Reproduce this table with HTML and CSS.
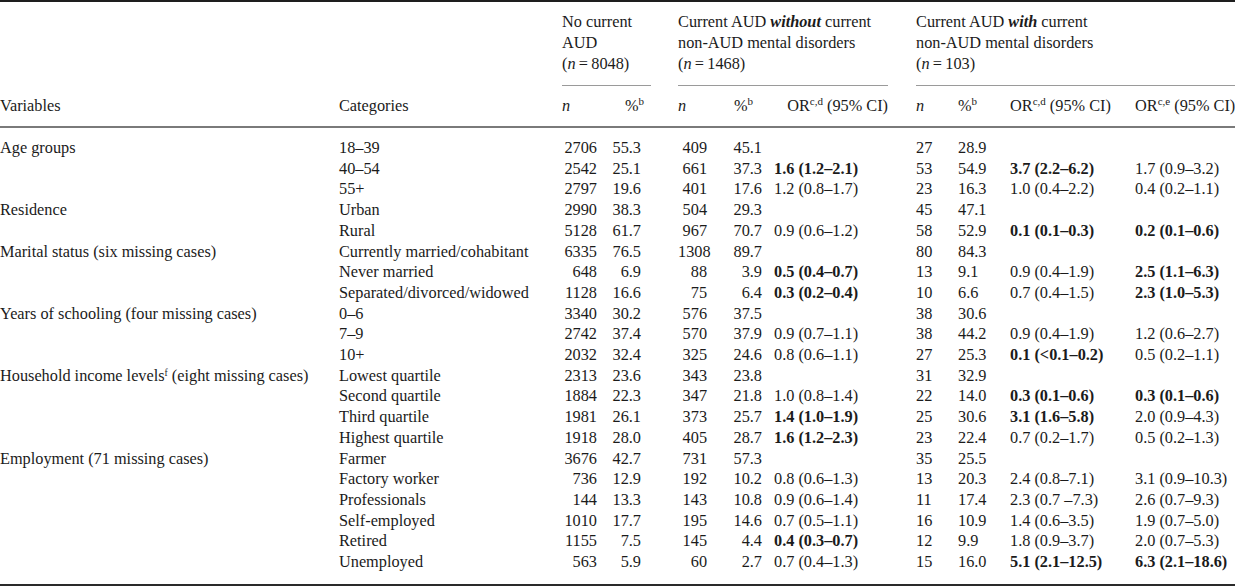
FILE: index.html
```html
<!DOCTYPE html>
<html lang="en">
<head>
<meta charset="utf-8">
<title>AUD table</title>
<link rel="stylesheet" href="styles.css">
</head>
<body>
<table class="t">
  <colgroup>
    <col class="c-var"><col class="c-cat">
    <col class="c-g1n"><col class="c-g1p">
    <col class="c-g2n"><col class="c-g2p"><col class="c-g2or">
    <col class="c-g3n"><col class="c-g3p"><col class="c-g3or"><col class="c-g3or2">
  </colgroup>
  <thead>
    <tr class="grp">
      <th></th><th></th>
      <th colspan="2"><div class="gh g1">No current<br>AUD<br>(<i>n</i>&thinsp;=&thinsp;8048)</div></th>
      <th colspan="3"><div class="gh g2">Current AUD <b><i>without</i></b> current<br>non-AUD mental disorders<br>(<i>n</i>&thinsp;=&thinsp;1468)</div></th>
      <th colspan="4"><div class="gh g3">Current AUD <b><i>with</i></b> current<br>non-AUD mental disorders<br>(<i>n</i>&thinsp;=&thinsp;103)</div></th>
    </tr>
    <tr class="sub">
      <th>Variables</th><th>Categories</th>
      <th class="h-g1n"><i>n</i></th><th class="h-g1p">%<sup>b</sup></th>
      <th class="h-g2n"><i>n</i></th><th class="h-g2p">%<sup>b</sup></th><th class="h-g2or">OR<sup>c,d</sup> (95% CI)</th>
      <th><i>n</i></th><th>%<sup>b</sup></th><th>OR<sup>c,d</sup> (95% CI)</th><th>OR<sup>c,e</sup> (95% CI)</th>
    </tr>
  </thead>
  <tbody>
    <tr class="first"><td>Age groups</td><td>18–39</td><td class="g1n">2706</td><td class="g1p">55.3</td><td class="g2n">409</td><td class="g2p">45.1</td><td></td><td>27</td><td>28.9</td><td></td><td></td></tr>
    <tr><td></td><td>40–54</td><td class="g1n">2542</td><td class="g1p">25.1</td><td class="g2n">661</td><td class="g2p">37.3</td><td><b>1.6 (1.2–2.1)</b></td><td>53</td><td>54.9</td><td><b>3.7 (2.2–6.2)</b></td><td>1.7 (0.9–3.2)</td></tr>
    <tr><td></td><td>55+</td><td class="g1n">2797</td><td class="g1p">19.6</td><td class="g2n">401</td><td class="g2p">17.6</td><td>1.2 (0.8–1.7)</td><td>23</td><td>16.3</td><td>1.0 (0.4–2.2)</td><td>0.4 (0.2–1.1)</td></tr>
    <tr><td>Residence</td><td>Urban</td><td class="g1n">2990</td><td class="g1p">38.3</td><td class="g2n">504</td><td class="g2p">29.3</td><td></td><td>45</td><td>47.1</td><td></td><td></td></tr>
    <tr><td></td><td>Rural</td><td class="g1n">5128</td><td class="g1p">61.7</td><td class="g2n">967</td><td class="g2p">70.7</td><td>0.9 (0.6–1.2)</td><td>58</td><td>52.9</td><td><b>0.1 (0.1–0.3)</b></td><td><b>0.2 (0.1–0.6)</b></td></tr>
    <tr><td>Marital status (six missing cases)</td><td>Currently married/cohabitant</td><td class="g1n">6335</td><td class="g1p">76.5</td><td class="g2n">1308</td><td class="g2p">89.7</td><td></td><td>80</td><td>84.3</td><td></td><td></td></tr>
    <tr><td></td><td>Never married</td><td class="g1n">648</td><td class="g1p">6.9</td><td class="g2n">88</td><td class="g2p">3.9</td><td><b>0.5 (0.4–0.7)</b></td><td>13</td><td>9.1</td><td>0.9 (0.4–1.9)</td><td><b>2.5 (1.1–6.3)</b></td></tr>
    <tr><td></td><td>Separated/divorced/widowed</td><td class="g1n">1128</td><td class="g1p">16.6</td><td class="g2n">75</td><td class="g2p">6.4</td><td><b>0.3 (0.2–0.4)</b></td><td>10</td><td>6.6</td><td>0.7 (0.4–1.5)</td><td><b>2.3 (1.0–5.3)</b></td></tr>
    <tr><td>Years of schooling (four missing cases)</td><td>0–6</td><td class="g1n">3340</td><td class="g1p">30.2</td><td class="g2n">576</td><td class="g2p">37.5</td><td></td><td>38</td><td>30.6</td><td></td><td></td></tr>
    <tr><td></td><td>7–9</td><td class="g1n">2742</td><td class="g1p">37.4</td><td class="g2n">570</td><td class="g2p">37.9</td><td>0.9 (0.7–1.1)</td><td>38</td><td>44.2</td><td>0.9 (0.4–1.9)</td><td>1.2 (0.6–2.7)</td></tr>
    <tr><td></td><td>10+</td><td class="g1n">2032</td><td class="g1p">32.4</td><td class="g2n">325</td><td class="g2p">24.6</td><td>0.8 (0.6–1.1)</td><td>27</td><td>25.3</td><td><b>0.1 (&lt;0.1–0.2)</b></td><td>0.5 (0.2–1.1)</td></tr>
    <tr><td>Household income levels<sup class="f">f</sup> (eight missing cases)</td><td>Lowest quartile</td><td class="g1n">2313</td><td class="g1p">23.6</td><td class="g2n">343</td><td class="g2p">23.8</td><td></td><td>31</td><td>32.9</td><td></td><td></td></tr>
    <tr><td></td><td>Second quartile</td><td class="g1n">1884</td><td class="g1p">22.3</td><td class="g2n">347</td><td class="g2p">21.8</td><td>1.0 (0.8–1.4)</td><td>22</td><td>14.0</td><td><b>0.3 (0.1–0.6)</b></td><td><b>0.3 (0.1–0.6)</b></td></tr>
    <tr><td></td><td>Third quartile</td><td class="g1n">1981</td><td class="g1p">26.1</td><td class="g2n">373</td><td class="g2p">25.7</td><td><b>1.4 (1.0–1.9)</b></td><td>25</td><td>30.6</td><td><b>3.1 (1.6–5.8)</b></td><td>2.0 (0.9–4.3)</td></tr>
    <tr><td></td><td>Highest quartile</td><td class="g1n">1918</td><td class="g1p">28.0</td><td class="g2n">405</td><td class="g2p">28.7</td><td><b>1.6 (1.2–2.3)</b></td><td>23</td><td>22.4</td><td>0.7 (0.2–1.7)</td><td>0.5 (0.2–1.3)</td></tr>
    <tr><td>Employment (71 missing cases)</td><td>Farmer</td><td class="g1n">3676</td><td class="g1p">42.7</td><td class="g2n">731</td><td class="g2p">57.3</td><td></td><td>35</td><td>25.5</td><td></td><td></td></tr>
    <tr><td></td><td>Factory worker</td><td class="g1n">736</td><td class="g1p">12.9</td><td class="g2n">192</td><td class="g2p">10.2</td><td>0.8 (0.6–1.3)</td><td>13</td><td>20.3</td><td>2.4 (0.8–7.1)</td><td>3.1 (0.9–10.3)</td></tr>
    <tr><td></td><td>Professionals</td><td class="g1n">144</td><td class="g1p">13.3</td><td class="g2n">143</td><td class="g2p">10.8</td><td>0.9 (0.6–1.4)</td><td>11</td><td>17.4</td><td>2.3 (0.7 –7.3)</td><td>2.6 (0.7–9.3)</td></tr>
    <tr><td></td><td>Self-employed</td><td class="g1n">1010</td><td class="g1p">17.7</td><td class="g2n">195</td><td class="g2p">14.6</td><td>0.7 (0.5–1.1)</td><td>16</td><td>10.9</td><td>1.4 (0.6–3.5)</td><td>1.9 (0.7–5.0)</td></tr>
    <tr><td></td><td>Retired</td><td class="g1n">1155</td><td class="g1p">7.5</td><td class="g2n">145</td><td class="g2p">4.4</td><td><b>0.4 (0.3–0.7)</b></td><td>12</td><td>9.9</td><td>1.8 (0.9–3.7)</td><td>2.0 (0.7–5.3)</td></tr>
    <tr class="last"><td></td><td>Unemployed</td><td class="g1n">563</td><td class="g1p">5.9</td><td class="g2n">60</td><td class="g2p">2.7</td><td>0.7 (0.4–1.3)</td><td>15</td><td>16.0</td><td><b>5.1 (2.1–12.5)</b></td><td><b>6.3 (2.1–18.6)</b></td></tr>
  </tbody>
</table>
</body>
</html>
```
FILE: styles.css
```css
html, body {
  margin: 0;
  padding: 0;
  background: #ffffff;
}
body {
  font-family: "Liberation Serif", "Times New Roman", serif;
  font-size: 16.3px;
  color: #1b1b1b;
}
.t {
  width: 1235px;
  border-collapse: collapse;
  table-layout: fixed;
  border-top: 2px solid #1e1e1e;
  border-bottom: 2px solid #2a2a2a;
}
.c-var { width: 339px; }
.c-cat { width: 223px; }
.c-g1n { width: 50px; }
.c-g1p { width: 66px; }
.c-g2n { width: 47px; }
.c-g2p { width: 49px; }
.c-g2or { width: 142px; }
.c-g3n { width: 42px; }
.c-g3p { width: 52px; }
.c-g3or { width: 125px; }
.c-g3or2 { width: 100px; }

th, td {
  padding: 0;
  text-align: left;
  font-weight: normal;
  white-space: nowrap;
  vertical-align: top;
  line-height: 20.7px;
}
thead .grp th {
  padding-top: 8.5px;
  vertical-align: bottom;
}
.gh {
  line-height: 21px;
  padding-bottom: 11.5px;
  border-bottom: 1px solid #9a9a9a;
}
.gh b { font-weight: bold; }
.g1 { margin-right: 27px; }
.g2 { margin-right: 28px; }
.g3 { margin-right: 0; }

thead .sub th {
  padding-top: 9.5px;
  padding-bottom: 9.8px;
  border-bottom: 2px solid #7a7a7a;
}
.h-g1p { padding-left: 13px; }
.h-g2p { padding-left: 9px; }
.h-g2or { text-align: right; padding-right: 28px; }

sup {
  font-size: 11px;
  line-height: 0;
  vertical-align: 6px;
}
sup.f { vertical-align: 5px; font-size: 9.5px; }

tbody tr.first td { padding-top: 10px; }
tbody tr.last td { padding-bottom: 11.3px; }

td.g1n { text-align: right; padding-right: 15px; }
td.g1p { text-align: right; padding-right: 37px; }
td.g2n { text-align: right; padding-right: 18px; }
td.g2p { text-align: right; padding-right: 12px; }
td b { font-weight: bold; }
```
